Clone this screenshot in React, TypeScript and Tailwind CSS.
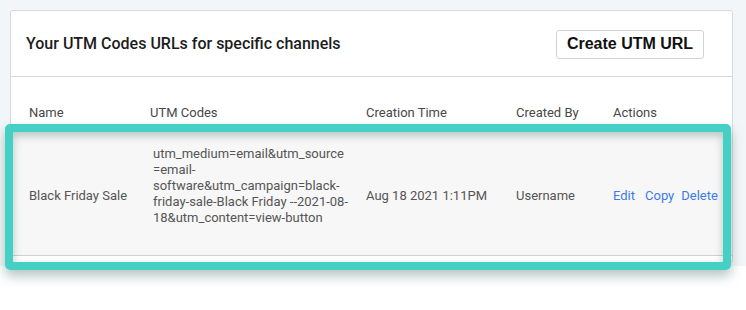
import React from "react";

const utmCode =
  "utm_medium=email&utm_source=email-software&utm_campaign=black-friday-sale-Black Friday --2021-08-18&utm_content=view-button";

export default function App() {
  return (
    <div
      className="relative w-[746px] h-[310px] bg-white overflow-hidden"
      style={{ fontFamily: "Roboto, 'Liberation Sans', sans-serif" }}
    >
      <div className="h-[266px] bg-[#f3f6f9] pt-[10px] pl-[10px] pr-[13px]">
        <div className="bg-white border border-[#d6dadf] rounded-[3px] pb-[6px]">
          {/* Header */}
          <div className="h-[66px] flex items-center justify-between pl-[15px] pr-[28px] border-b border-[#d6dadf]">
            <h2 className="text-[16px] font-medium text-[#1c1c1c]">
              Your UTM Codes URLs for specific channels
            </h2>
            <button
              className="h-[29px] w-[148px] mt-[1px] rounded-[3px] border border-[#cfd3d8] bg-white text-[16px] font-bold text-[#111]"
              style={{ fontFamily: "'Liberation Sans', Arial, sans-serif" }}
            >
              Create UTM URL
            </button>
          </div>

          {/* Table head */}
          <div className="grid grid-cols-[121px_216px_150px_97px_1fr] pl-[18px] h-[55px] items-end pb-[11px] text-[13px] leading-[16px] text-[#474747]">
            <div>Name</div>
            <div>UTM Codes</div>
            <div>Creation Time</div>
            <div>Created By</div>
            <div>Actions</div>
          </div>

          {/* Row */}
          <div className="grid grid-cols-[121px_216px_150px_97px_1fr] pl-[18px] pt-[4px] h-[124px] items-center bg-[#f7f7f7] border-b border-[#cfcfcf] text-[13px] leading-[16px] text-[#555]">
            <div>Black Friday Sale</div>
            <div className="pl-[3px] pb-[19px]">
              <div className="w-[198px] break-words">{utmCode}</div>
            </div>
            <div>Aug 18 2021 1:11PM</div>
            <div>Username</div>
            <div className="flex text-[#3d7be6]">
              <span>Edit</span>
              <span className="ml-[10px]">Copy</span>
              <span className="ml-[7px]">Delete</span>
            </div>
          </div>
        </div>
      </div>

      {/* Highlight annotation */}
      <div
        className="absolute left-[5px] top-[124px] w-[726px] h-[146px] border-[8px] border-[#44d0c4] rounded-[5px] pointer-events-none"
        style={{
          boxShadow:
            "0 6px 12px rgba(40,90,80,0.35), inset 0 4px 9px rgba(40,90,80,0.3)",
        }}
      />
    </div>
  );
}
